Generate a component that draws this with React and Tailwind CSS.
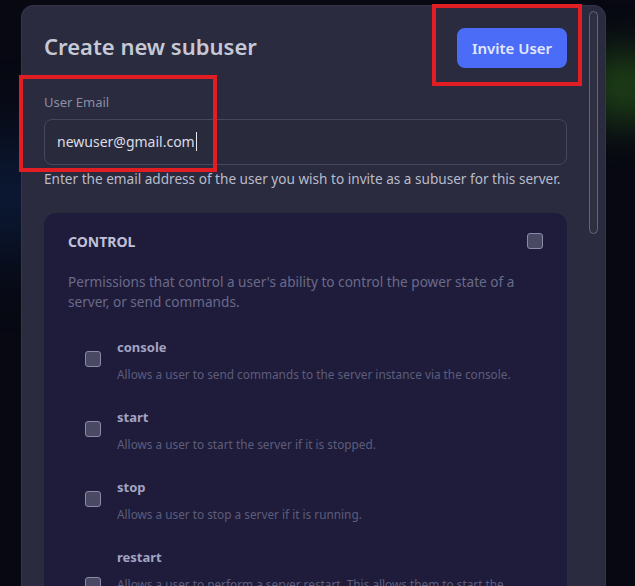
import React from "react";

const PERMS = [
  { key: "console", desc: "Allows a user to send commands to the server instance via the console." },
  { key: "start", desc: "Allows a user to start the server if it is stopped." },
  { key: "stop", desc: "Allows a user to stop a server if it is running." },
  { key: "restart", desc: "Allows a user to perform a server restart. This allows them to start the server if it is offline, but not put the server in a completely stopped state." },
];

const Box = () => (
  <span className="block w-4 h-4 shrink-0 rounded-[3px] border border-[#8a89a8] bg-[#4a4963]" />
);

export default function App() {
  return (
    <div className="relative h-[586px] w-full overflow-hidden bg-[#070812] font-['Noto_Sans',sans-serif]">
      {/* background glows */}
      <div className="absolute -left-10 top-[140px] w-24 h-28 rounded-full bg-[#123066] opacity-60 blur-2xl" />
      <div className="absolute right-[-30px] top-[55px] w-20 h-16 rounded-full bg-[#2f6a1a] opacity-70 blur-xl" />

      <div className="relative ml-[21px] mt-[5px] w-[585px] h-[620px] rounded-[12px] border border-[#34354b] bg-[#2a2b3e] pl-[22px] pr-[38px] pt-[22px]">
        <div className="flex items-center justify-between">
          <h2 className="text-[22px] font-semibold text-[#c6c8d6] -mt-[3px]">Create new subuser</h2>
          <button className="h-10 w-[110px] rounded-lg bg-[#4a6cf7] text-[15px] font-semibold text-[#e4e8ff]">Invite User</button>
        </div>

        <label className="block mt-[25px] text-[13px] text-[#8c8ea3]">User Email</label>
        <div className="mt-[6px] flex h-[46px] items-center rounded-lg border border-[#45475b] bg-[#292a3c] px-3">
          <span className="text-[14px] text-[#dcdde6]">newuser@gmail.com</span>
          <span className="ml-[1px] h-[19px] w-px bg-[#e6e6ee]" />
        </div>
        <p className="mt-[4px] text-[13.6px] text-[#b9bbcb]">Enter the email address of the user you wish to invite as a subuser for this server.</p>

        <div className="mt-[24px] rounded-xl bg-[#1e1c3a] px-6 pt-[18px] pb-6">
          <div className="flex items-center justify-between">
            <h3 className="text-[14px] font-bold text-[#c0c1d8]">CONTROL</h3>
            <Box />
          </div>
          <p className="mt-[20px] text-[13.6px] leading-5 text-[#6b6a8a]">Permissions that control a user's ability to control the power state of a server, or send commands.</p>

          <div className="mt-[25px] flex flex-col gap-[25px] pl-[17px]">
            {PERMS.map((p) => (
              <div key={p.key} className="flex items-center gap-4">
                <Box />
                <div className="max-w-[395px]">
                  <div className="text-[13px] font-bold text-[#a3a3c2] leading-5">{p.key}</div>
                  <div className="mt-[9px] text-[11.8px] leading-4 text-[#5d5c7c]">{p.desc}</div>
                </div>
              </div>
            ))}
          </div>
        </div>

        {/* scrollbar */}
        <div className="absolute right-[7px] top-[5px] h-[223px] w-[9px] rounded-full border border-[#626678] bg-[#2e3042]" />
      </div>

      {/* annotation boxes */}
      <div className="absolute left-[432px] top-[4px] w-[150px] h-[82px] border-[4px] border-[#e01e24]" />
      <div className="absolute left-[19px] top-[75px] w-[198px] h-[97px] border-[4px] border-[#e01e24]" />
    </div>
  );
}
